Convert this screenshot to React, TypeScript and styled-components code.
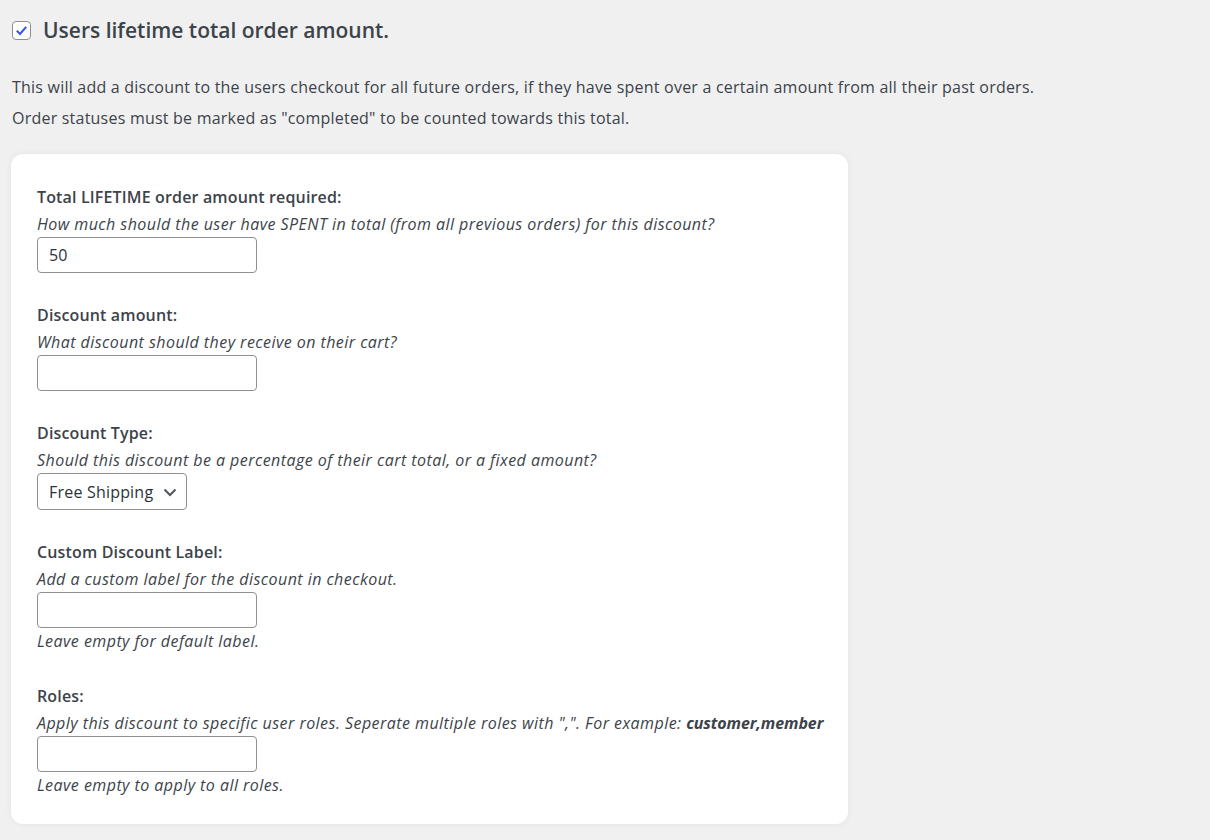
import React from 'react'
import styled, { createGlobalStyle } from 'styled-components'

const GlobalStyle = createGlobalStyle`
  body {
    margin: 0;
    background: #f0f0f1;
    color: #3c434a;
    font-family: "Open Sans", "Noto Sans", sans-serif;
    font-size: 16px;
  }
`

const Page = styled.div`
  padding: 12px 11px 20px;
`

const Header = styled.label`
  display: flex;
  align-items: center;
  gap: 12px;
  height: 36px;
  padding-left: 1px;
  cursor: pointer;
`

const Check = styled.span`
  width: 19px;
  height: 19px;
  box-sizing: border-box;
  border: 1px solid #8c8f94;
  border-radius: 4px;
  background: #fff;
  display: flex;
  align-items: center;
  justify-content: center;
`

const Title = styled.h2`
  margin: 0;
  font-size: 21px;
  font-weight: 600;
  color: #3c434a;
`

const Intro = styled.div`
  margin: 24px 1px 20px;
  letter-spacing: 0.22px;
  p {
    margin: 0;
    line-height: 31px;
  }
`

const Card = styled.div`
  width: 837px;
  box-sizing: border-box;
  background: #fff;
  border-radius: 12px;
  box-shadow: 0 0 6px rgba(0, 0, 0, 0.06);
  padding: 30px 26px 26px;
  display: flex;
  flex-direction: column;
  gap: 29px;
`

const Field = styled.div`
  display: flex;
  flex-direction: column;
  align-items: flex-start;
`

const Label = styled.div`
  font-weight: 600;
  line-height: 27px;
  letter-spacing: 0.15px;
`

const Hint = styled.div`
  font-style: italic;
  line-height: 26px;
  letter-spacing: 0.45px;
  white-space: nowrap;
  b {
    font-weight: 700;
    letter-spacing: -0.1px;
  }
`

const Input = styled.input`
  width: 220px;
  height: 36px;
  box-sizing: border-box;
  border: 1px solid #8c8f94;
  border-radius: 4px;
  padding: 0 11px;
  font: inherit;
  color: #2c3338;
`

const SelectBox = styled.div`
  width: 150px;
  height: 37px;
  box-sizing: border-box;
  border: 1px solid #8c8f94;
  border-radius: 4px;
  padding: 0 8px 0 11px;
  display: flex;
  align-items: center;
  justify-content: space-between;
  color: #2c3338;
  letter-spacing: 0.2px;
`

const fields = [
  {
    label: 'Total LIFETIME order amount required:',
    hint: 'How much should the user have SPENT in total (from all previous orders) for this discount?',
    value: '50',
  },
  {
    label: 'Discount amount:',
    hint: 'What discount should they receive on their cart?',
    value: '',
  },
]

function Chevron() {
  return (
    <svg width="16" height="16" viewBox="0 0 16 16">
      <path d="M2.5 5.5 L8 11 L13.5 5.5" fill="none" stroke="#50575e" strokeWidth="2" />
    </svg>
  )
}

export default function App() {
  return (
    <>
      <GlobalStyle />
      <Page>
        <Header>
          <Check>
            <svg width="15" height="15" viewBox="0 0 14 14">
              <path d="M2.6 7.2 L5.6 10.2 L11.4 3.6" fill="none" stroke="#3858e9" strokeWidth="2" />
            </svg>
          </Check>
          <Title>Users lifetime total order amount.</Title>
        </Header>
        <Intro>
          <p>This will add a discount to the users checkout for all future orders, if they have spent over a certain amount from all their past orders.</p>
          <p>Order statuses must be marked as "completed" to be counted towards this total.</p>
        </Intro>
        <Card>
          {fields.map((f) => (
            <Field key={f.label}>
              <Label>{f.label}</Label>
              <Hint>{f.hint}</Hint>
              <Input type="text" defaultValue={f.value} />
            </Field>
          ))}
          <Field>
            <Label>Discount Type:</Label>
            <Hint>Should this discount be a percentage of their cart total, or a fixed amount?</Hint>
            <SelectBox>
              <span>Free Shipping</span>
              <Chevron />
            </SelectBox>
          </Field>
          <Field>
            <Label>Custom Discount Label:</Label>
            <Hint>Add a custom label for the discount in checkout.</Hint>
            <Input type="text" />
            <Hint>Leave empty for default label.</Hint>
          </Field>
          <Field>
            <Label>Roles:</Label>
            <Hint>
              Apply this discount to specific user roles. Seperate multiple roles with ",". For example: <b>customer,member</b>
            </Hint>
            <Input type="text" />
            <Hint>Leave empty to apply to all roles.</Hint>
          </Field>
        </Card>
      </Page>
    </>
  )
}
